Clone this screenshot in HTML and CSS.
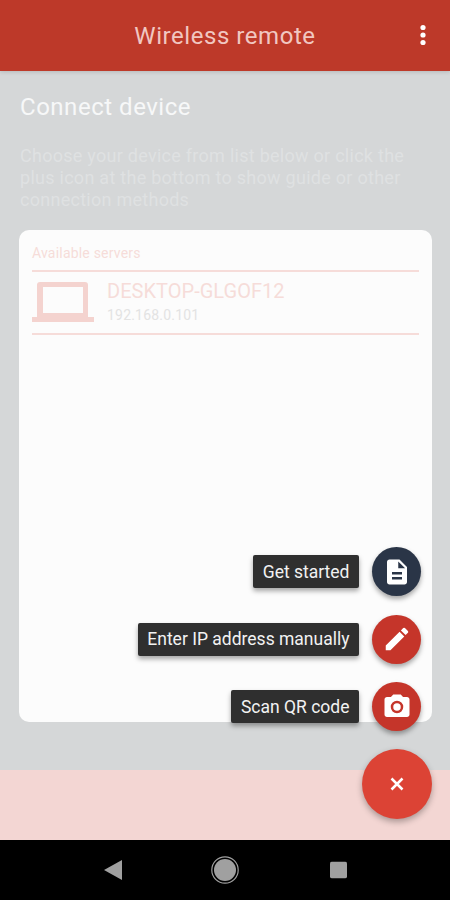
FILE: index.html
```html
<!DOCTYPE html>
<html lang="en">
<head>
    <meta charset="UTF-8">
    <meta name="viewport" content="width=device-width, initial-scale=1.0">
    <title>Wireless remote</title>
    <link rel="stylesheet" href="styles.css">
</head>
<body>
    <div class="screen">
        <header class="app-bar">
            <h1>Wireless remote</h1>
            <svg class="menu-icon" width="8" height="22" viewBox="0 0 8 22">
                <circle cx="4" cy="3.5" r="2.6"/>
                <circle cx="4" cy="11" r="2.6"/>
                <circle cx="4" cy="18.5" r="2.6"/>
            </svg>
        </header>

        <main class="content">
            <h2>Connect device</h2>
            <p class="intro">Choose your device from list below or click the plus icon at the bottom to show guide or other connection methods</p>

            <section class="card">
                <div class="card-title">Available servers</div>
                <div class="server">
                    <svg class="laptop" width="62" height="42" viewBox="0 0 62 42">
                        <path d="M8 1h45a3 3 0 0 1 3 3v32h6v5H0v-5h5V4a3 3 0 0 1 3-3zM11 6v26h40V6z" fill-rule="evenodd"/>
                    </svg>
                    <div class="server-info">
                        <div class="server-name">DESKTOP-GLGOF12</div>
                        <div class="server-ip">192.168.0.101</div>
                    </div>
                </div>
            </section>
        </main>

        <div class="bottom-bar"></div>

        <nav class="nav-bar">
            <svg width="18" height="20" viewBox="0 0 18 20"><path class="nav-fill" d="M18 0v20L0 10z"/></svg>
            <svg width="28" height="28" viewBox="0 0 28 28">
                <circle class="nav-ring" cx="14" cy="14" r="13.2"/>
                <circle class="nav-fill" cx="14" cy="14" r="11"/>
            </svg>
            <svg width="17" height="17" viewBox="0 0 17 17"><rect class="nav-fill" width="17" height="17" rx="2"/></svg>
        </nav>

        <div class="fab-menu">
            <div class="fab-row">
                <span class="fab-label">Get started</span>
                <span class="mini-fab navy">
                    <svg width="30" height="30" viewBox="0 0 24 24"><path fill="#fff" d="M14 2H6c-1.1 0-2 .9-2 2v16c0 1.1.9 2 2 2h12c1.100 0 2-.9 2-2V8l-6-6zm2 16H8v-2h8v2zm0-4H8v-2h8v2zm-3-5V3.500L18.500 9H13z"/></svg>
                </span>
            </div>
            <div class="fab-row">
                <span class="fab-label">Enter IP address manually</span>
                <span class="mini-fab red">
                    <svg width="30" height="30" viewBox="0 0 24 24"><path fill="#fff" d="M3 17.250V21h3.750L17.810 9.940l-3.750-3.750L3 17.250zM20.710 7.040a1 1 0 0 0 0-1.410l-2.340-2.340a1 1 0 0 0-1.410 0l-1.830 1.830 3.750 3.750 1.830-1.830z"/></svg>
                </span>
            </div>
            <div class="fab-row">
                <span class="fab-label">Scan QR code</span>
                <span class="mini-fab red">
                    <svg width="30" height="30" viewBox="0 0 24 24"><path fill="#fff" fill-rule="evenodd" d="M9 2L7.170 4H4c-1.100 0-2 .9-2 2v12c0 1.100.9 2 2 2h16c1.100 0 2-.9 2-2V6c0-1.100-.9-2-2-2h-3.170L15 2H9zm3 5a5 5 0 1 1 0 10 5 5 0 0 1 0-10zm0 2a3 3 0 1 0 0 6 3 3 0 0 0 0-6z"/></svg>
                </span>
            </div>
        </div>

        <div class="main-fab">
            <svg width="14" height="14" viewBox="0 0 14 14"><path d="M1.500 1.500l11 11M12.500 1.500l-11 11"/></svg>
        </div>
    </div>
</body>
</html>
```

FILE: styles.css
```css
* {
    margin: 0;
    padding: 0;
    box-sizing: border-box;
}

body {
    font-family: Roboto, "Liberation Sans", sans-serif;
    background: #000;
}

.screen {
    position: relative;
    width: 450px;
    height: 900px;
    display: flex;
    flex-direction: column;
    overflow: hidden;
    background: #d5d7d8;
}

.app-bar {
    height: 71px;
    flex-shrink: 0;
    position: relative;
    display: flex;
    align-items: center;
    justify-content: center;
    background: #bd3929;
    box-shadow: 0 1px 4px rgba(0, 0, 0, 0.15);
}

.app-bar h1 {
    font-size: 24px;
    font-weight: 400;
    letter-spacing: 0.55px;
    color: #f1c7c1;
    margin-top: 0;
}

.menu-icon {
    position: absolute;
    right: 23px;
    top: 24px;
    fill: #fff;
}

.content {
    flex: 1;
    padding: 22px 18px 48px 19px;
    display: flex;
    flex-direction: column;
}

.content h2 {
    font-size: 24px;
    font-weight: 400;
    line-height: 28px;
    letter-spacing: 0.52px;
    color: #f7f8f8;
    padding-left: 1px;
}

.intro {
    margin-top: 24px;
    padding-left: 1px;
    font-size: 18px;
    line-height: 22px;
    letter-spacing: 0.27px;
    color: #dfe1e2;
}

.card {
    flex: 1;
    margin-top: 19px;
    padding: 14px 13px 0;
    background: #fcfcfc;
    border-radius: 10px;
}

.card-title {
    font-size: 14px;
    line-height: 18px;
    letter-spacing: 0.2px;
    color: #f6dcd9;
    padding-bottom: 8px;
    border-bottom: 2px solid #f6dcd9;
}

.server {
    height: 63px;
    display: flex;
    align-items: flex-start;
    border-bottom: 2px solid #f6dcd9;
}

.laptop {
    margin-top: 9px;
    fill: #f4d3cf;
    flex-shrink: 0;
}

.server-info {
    margin-left: 13px;
    padding-top: 7px;
}

.server-name {
    font-size: 20px;
    line-height: 24px;
    letter-spacing: 0.03px;
    color: #f6dcd9;
}

.server-ip {
    margin-top: 3px;
    font-size: 14px;
    line-height: 18px;
    letter-spacing: 0.2px;
    color: #e3e3e3;
}

.bottom-bar {
    height: 70px;
    flex-shrink: 0;
    background: #f3d6d3;
}

.nav-bar {
    height: 60px;
    flex-shrink: 0;
    position: relative;
    background: #000;
}

.nav-bar svg {
    position: absolute;
    top: 50%;
    transform: translateY(-50%);
}

.nav-bar svg:nth-child(1) { left: 104px; }
.nav-bar svg:nth-child(2) { left: 211px; }
.nav-bar svg:nth-child(3) { left: 330px; }

.nav-fill {
    fill: #a0a0a0;
}

.nav-ring {
    fill: none;
    stroke: #a0a0a0;
    stroke-width: 1.200;
}

/* speed dial over the card */
.fab-menu {
    position: absolute;
    right: 29px;
    top: 547px;
    display: flex;
    flex-direction: column;
    gap: 18.500px;
}

.fab-row {
    display: flex;
    align-items: center;
    justify-content: flex-end;
    gap: 13px;
}

.fab-label {
    height: 33px;
    padding: 0 9.500px;
    display: flex;
    align-items: center;
    font-size: 17.500px;
    color: #f2f2f2;
    background: #2f2f2f;
    border-radius: 2px;
    box-shadow: 0 3px 5px rgba(0, 0, 0, 0.35);
}

.mini-fab {
    width: 49px;
    height: 49px;
    border-radius: 50%;
    display: flex;
    align-items: center;
    justify-content: center;
    box-shadow: 0 3px 5px rgba(0, 0, 0, 0.35);
}

.navy { background: #2a3547; }
.red { background: #c5352a; }

.main-fab {
    position: absolute;
    left: 362px;
    top: 749px;
    width: 70px;
    height: 70px;
    border-radius: 50%;
    display: flex;
    align-items: center;
    justify-content: center;
    background: #dc4335;
    box-shadow: 0 3px 6px rgba(0, 0, 0, 0.3);
}

.main-fab path {
    fill: none;
    stroke: #fff;
    stroke-width: 2.500;
}
```
